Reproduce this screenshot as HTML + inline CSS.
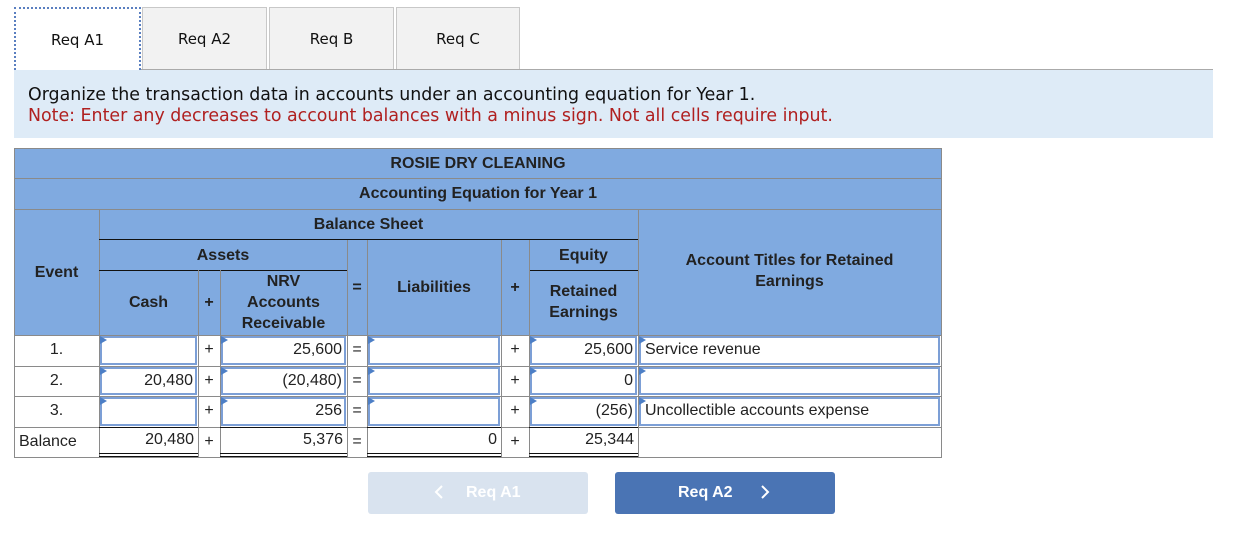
<!DOCTYPE html>
<html><head><meta charset="utf-8"><style>
*{margin:0;padding:0;box-sizing:border-box}
body{width:1254px;height:548px;background:#fff;position:relative;overflow:hidden;font-family:"Liberation Sans",Arial,sans-serif;color:#222}
.a{position:absolute}
.tab{position:absolute;top:7px;height:63px;background:#f2f2f2;border:1px solid #c8c8c8;border-bottom:none;font:15px "DejaVu Sans",Verdana,sans-serif;color:#111;text-align:center;line-height:62px}
.h{position:absolute;font-weight:bold;font-size:16px;color:#222;text-align:center;display:flex;align-items:center;justify-content:center;line-height:21px}
.vl{position:absolute;width:1px;background:#8a8a8a}
.hl{position:absolute;height:1px;background:#8a8a8a}
.bl{position:absolute;height:2px;background:#111}
.in{position:absolute;background:#fff;border:2px solid #7c9fd6;text-align:right;padding-right:2px;font-size:16px;line-height:24px;color:#222}
.in:before{content:"";position:absolute;left:-2px;top:-2px;border-left:7px solid #4d7fc6;border-top:4px solid transparent;border-bottom:4px solid transparent}
.t{position:absolute;font-size:16px;line-height:30px;color:#222}
</style></head><body>
<div class="tab" style="left:14px;width:127px;background:#fff;border:2px dotted #5a7fc0;border-bottom:none">Req A1</div>
<div class="tab" style="left:142px;width:125px">Req A2</div>
<div class="tab" style="left:269px;width:125px">Req B</div>
<div class="tab" style="left:396px;width:124px">Req C</div>
<div class="a" style="left:141px;top:69px;width:1072px;height:1px;background:#aaa"></div>
<div class="a" style="left:14px;top:70px;width:1199px;height:68px;background:#deebf7"></div>
<div class="a" style="left:28px;top:85px;font:17.4px 'DejaVu Sans',Verdana,sans-serif;color:#111;line-height:21px;white-space:nowrap">Organize the transaction data in accounts under an accounting equation for Year 1.<br><span style="color:#b02020">Note: Enter any decreases to account balances with a minus sign. Not all cells require input.</span></div>

<!-- header -->
<div class="a" style="left:14px;top:148px;width:928px;height:188px;background:#80aae0;border:1px solid #8a8a8a"></div>
<div class="hl" style="left:14px;top:178px;width:928px"></div>
<div class="hl" style="left:14px;top:209px;width:928px"></div>
<div class="vl" style="left:99px;top:209px;height:127px"></div>
<div class="vl" style="left:638px;top:209px;height:127px"></div>
<div class="bl" style="left:99px;top:239px;width:539px;height:1px"></div>
<div class="bl" style="left:99px;top:270px;width:248px;height:1px"></div>
<div class="bl" style="left:529px;top:270px;width:109px;height:1px"></div>
<div class="vl" style="left:347px;top:240px;height:96px"></div>
<div class="vl" style="left:367px;top:240px;height:96px"></div>
<div class="vl" style="left:501px;top:240px;height:96px"></div>
<div class="vl" style="left:529px;top:240px;height:96px"></div>
<div class="vl" style="left:198px;top:270px;height:66px"></div>
<div class="vl" style="left:220px;top:270px;height:66px"></div>
<div class="h" style="left:14px;top:148px;width:928px;height:30px">ROSIE DRY CLEANING</div>
<div class="h" style="left:14px;top:178px;width:928px;height:31px">Accounting Equation for Year 1</div>
<div class="h" style="left:99px;top:209px;width:539px;height:30px">Balance Sheet</div>
<div class="h" style="left:14px;top:209px;width:85px;height:127px">Event</div>
<div class="h" style="left:99px;top:240px;width:248px;height:30px">Assets</div>
<div class="h" style="left:529px;top:240px;width:109px;height:30px">Equity</div>
<div class="h" style="left:99px;top:270px;width:99px;height:64px">Cash</div>
<div class="h" style="left:198px;top:270px;width:22px;height:64px">+</div>
<div class="h" style="left:220px;top:270px;width:127px;height:64px">NRV<br>Accounts<br>Receivable</div>
<div class="h" style="left:347px;top:240px;width:20px;height:94px">=</div>
<div class="h" style="left:367px;top:240px;width:134px;height:94px">Liabilities</div>
<div class="h" style="left:501px;top:240px;width:28px;height:94px">+</div>
<div class="h" style="left:529px;top:270px;width:109px;height:64px">Retained<br>Earnings</div>
<div class="h" style="left:638px;top:209px;width:303px;height:127px;padding-bottom:4px">Account Titles for Retained<br>Earnings</div>

<!-- body grid -->
<div class="a" style="left:14px;top:335px;width:928px;height:123px;border:1px solid #8a8a8a;border-top:none"></div>
<div class="vl" style="left:99px;top:335px;height:122px"></div>
<div class="vl" style="left:198px;top:335px;height:122px"></div>
<div class="vl" style="left:220px;top:335px;height:122px"></div>
<div class="vl" style="left:347px;top:335px;height:122px"></div>
<div class="vl" style="left:367px;top:335px;height:122px"></div>
<div class="vl" style="left:501px;top:335px;height:122px"></div>
<div class="vl" style="left:529px;top:335px;height:122px"></div>
<div class="vl" style="left:638px;top:335px;height:122px"></div>
<div class="hl" style="left:14px;top:366px;width:928px"></div>
<div class="hl" style="left:14px;top:396px;width:928px"></div>
<div class="hl" style="left:14px;top:427px;width:928px"></div>
<div class="bl" style="left:99px;top:427px;width:99px;height:1px"></div>
<div class="bl" style="left:220px;top:427px;width:127px;height:1px"></div>
<div class="bl" style="left:367px;top:427px;width:134px;height:1px"></div>
<div class="bl" style="left:529px;top:427px;width:109px;height:1px"></div>
<div class="a" style="left:99px;top:453px;width:99px;height:4px;border-top:1px solid #111;border-bottom:1px solid #111"></div>
<div class="a" style="left:220px;top:453px;width:127px;height:4px;border-top:1px solid #111;border-bottom:1px solid #111"></div>
<div class="a" style="left:367px;top:453px;width:134px;height:4px;border-top:1px solid #111;border-bottom:1px solid #111"></div>
<div class="a" style="left:529px;top:453px;width:109px;height:4px;border-top:1px solid #111;border-bottom:1px solid #111"></div>

<!-- row labels and operators -->
<div class="t" style="left:14px;top:335px;width:85px;text-align:center">1.</div>
<div class="t" style="left:14px;top:366px;width:85px;text-align:center">2.</div>
<div class="t" style="left:14px;top:396px;width:85px;text-align:center">3.</div>
<div class="t" style="left:19px;top:427px">Balance</div>
<div class="t" style="left:198px;top:335px;width:22px;text-align:center">+</div>
<div class="t" style="left:198px;top:366px;width:22px;text-align:center">+</div>
<div class="t" style="left:198px;top:396px;width:22px;text-align:center">+</div>
<div class="t" style="left:198px;top:427px;width:22px;text-align:center">+</div>
<div class="t" style="left:347px;top:335px;width:20px;text-align:center">=</div>
<div class="t" style="left:347px;top:366px;width:20px;text-align:center">=</div>
<div class="t" style="left:347px;top:396px;width:20px;text-align:center">=</div>
<div class="t" style="left:347px;top:427px;width:20px;text-align:center">=</div>
<div class="t" style="left:501px;top:335px;width:28px;text-align:center">+</div>
<div class="t" style="left:501px;top:366px;width:28px;text-align:center">+</div>
<div class="t" style="left:501px;top:396px;width:28px;text-align:center">+</div>
<div class="t" style="left:501px;top:427px;width:28px;text-align:center">+</div>

<!-- inputs -->
<div class="in" style="left:100px;top:336px;width:97px;height:29px"></div>
<div class="in" style="left:221px;top:336px;width:125px;height:29px">25,600</div>
<div class="in" style="left:368px;top:336px;width:132px;height:29px"></div>
<div class="in" style="left:530px;top:336px;width:107px;height:29px">25,600</div>
<div class="in" style="left:639px;top:336px;width:301px;height:29px;text-align:left;padding-left:4px">Service revenue</div>

<div class="in" style="left:100px;top:367px;width:97px;height:28px">20,480</div>
<div class="in" style="left:221px;top:367px;width:125px;height:28px">(20,480)</div>
<div class="in" style="left:368px;top:367px;width:132px;height:28px"></div>
<div class="in" style="left:530px;top:367px;width:107px;height:28px">0</div>
<div class="in" style="left:639px;top:367px;width:301px;height:28px"></div>

<div class="in" style="left:100px;top:397px;width:97px;height:29px"></div>
<div class="in" style="left:221px;top:397px;width:125px;height:29px">256</div>
<div class="in" style="left:368px;top:397px;width:132px;height:29px"></div>
<div class="in" style="left:530px;top:397px;width:107px;height:29px">(256)</div>
<div class="in" style="left:639px;top:397px;width:301px;height:29px;text-align:left;padding-left:4px">Uncollectible accounts expense</div>

<div class="t" style="left:99px;top:425px;width:95px;text-align:right">20,480</div>
<div class="t" style="left:220px;top:425px;width:123px;text-align:right">5,376</div>
<div class="t" style="left:367px;top:425px;width:130px;text-align:right">0</div>
<div class="t" style="left:529px;top:425px;width:105px;text-align:right">25,344</div>

<!-- buttons -->
<div class="a" style="left:368px;top:472px;width:220px;height:42px;background:#d9e3ef;border-radius:3px"></div>
<svg class="a" style="left:434px;top:485px" width="10" height="14"><path d="M8 1 L2 7 L8 13" fill="none" stroke="#fff" stroke-width="2"/></svg>
<div class="a" style="left:466px;top:472px;height:42px;line-height:42px;color:#fff;font-weight:bold;font-size:16px">Req A1</div>
<div class="a" style="left:615px;top:472px;width:220px;height:42px;background:#4a74b4;border-radius:3px"></div>
<div class="a" style="left:678px;top:472px;height:42px;line-height:42px;color:#fff;font-weight:bold;font-size:16px">Req A2</div>
<svg class="a" style="left:760px;top:485px" width="10" height="14"><path d="M2 1 L8 7 L2 13" fill="none" stroke="#fff" stroke-width="2"/></svg>
</body></html>
